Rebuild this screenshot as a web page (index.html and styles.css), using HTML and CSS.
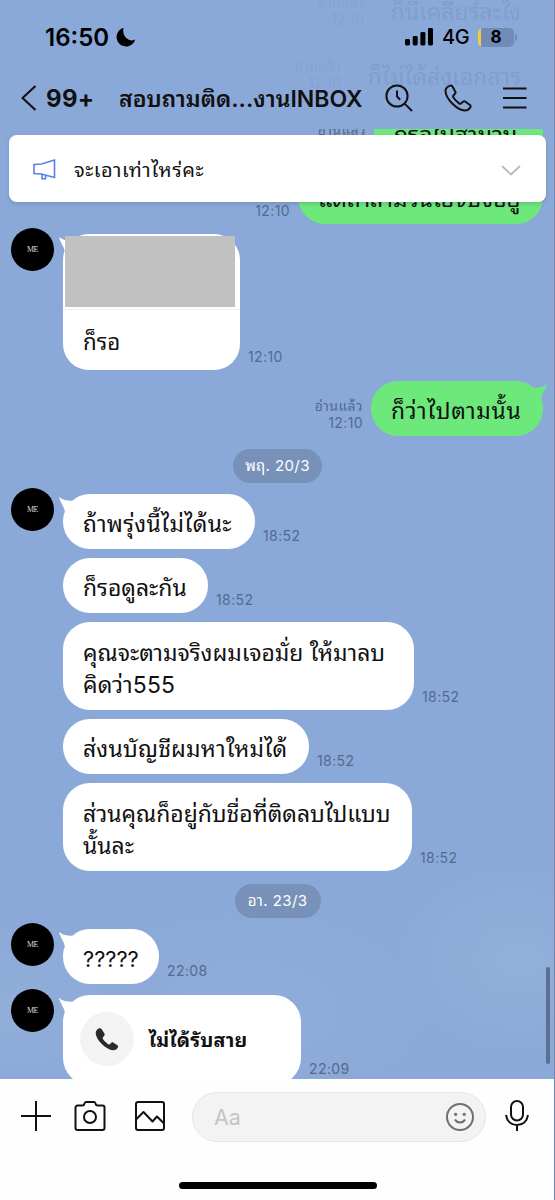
FILE: index.html
```html
<!DOCTYPE html>
<html lang="th">
<head>
<meta charset="utf-8">
<title>Chat</title>
<link rel="stylesheet" href="styles.css">
</head>
<body>
<div class="phone">
  <header class="top">
    <div class="ghosts">
      <span class="ghost ghost-a">ก็นี่เคลียร์ละไง</span>
      <span class="ghost ghost-b">ก็ไม่ได้ส่งเอกสาร</span>
      <span class="ghost ghost-c">อ่านแล้ว<br>12:10</span>
      <span class="ghost ghost-d">อ่านแล้ว<br>12:10</span>
    </div>
    <div class="status">
      <span class="clock">16:50</span>
      <svg class="moon" width="20" height="20" viewBox="0 0 20 20"><path d="M7.500.8A9.500 9.500 0 1 0 19.200 12.600C14 15.500 5.500 10.500 7.500.8Z"/></svg>
      <svg class="signal" width="29" height="18" viewBox="0 0 29 18"><rect x="0" y="11" width="5" height="6.5" rx="1.4"/><rect x="7.7" y="8" width="5" height="9.5" rx="1.4"/><rect x="15.4" y="4" width="5" height="13.5" rx="1.4"/><rect x="23" y="0" width="5" height="17.5" rx="1.4"/></svg>
      <span class="net">4G</span>
      <span class="battery">8</span>
    </div>
    <nav class="bar">
      <svg class="back" width="16" height="26" viewBox="0 0 16 26"><path d="M14.5 1 1.5 13l13 12"/></svg>
      <span class="count">99+</span>
      <h1 class="title">สอบถามติด...งานINBOX</h1>
      <svg class="ico find" width="28" height="28" viewBox="0 0 28 28"><circle cx="12" cy="12" r="10.6"/><path d="M19.6 19.6 27 27M12 6.5v6l3.2 3.2"/></svg>
      <svg class="ico call" width="28" height="28" viewBox="0 0 28 28"><path d="M6.2 1.6C3.8 2.4 1.6 4 1.5 6.800c0 4 3.200 9.200 7 13C12.500 23.700 17 26.600 21 26.500c2.700-.1 4.500-1.600 5.400-3.300.4-.8.2-1.600-.5-2.200l-4.400-3.300c-.8-.6-1.800-.6-2.500 0l-2 1.700c-.6.5-1.300.4-1.900 0-1.900-1.400-4.400-4-5.700-5.900-.5-.7-.4-1.400.1-2l1.500-1.800c.6-.7.6-1.700.1-2.500L8.300 2.300c-.5-.7-1.300-1-2.100-.7Z"/></svg>
      <svg class="ico menu" width="24" height="24" viewBox="0 0 24 24"><path d="M0 2.500h23.500M0 12h23.500M0 21.500h23.500"/></svg>
    </nav>
  </header>

  <section class="notice">
    <svg class="horn" width="24" height="24" viewBox="0 0 24 24"><path d="M2 7.500 9.500 7 22.500 3v17.500L9.500 17 2 16.500ZM10 17.500v4.200h3.500v-3.500"/></svg>
    <span class="notice-text">จะเอาเท่าไหร่คะ</span>
    <svg class="chev" width="20" height="11" viewBox="0 0 20 11"><path d="m1 1 9 8.500L19 1"/></svg>
  </section>

  <main class="chat">
    <div class="row me first"><span class="meta">อ่านแล้ว<br>12:10</span><div class="bubble green w169"><span class="t a1">ก็รอไปสามวัน</span></div></div>
    <div class="row me"><span class="meta">12:10</span><div class="bubble green w245"><span class="t a2">แต่ถ้าสามวันไอ้จบงี้อยู่</span></div></div>
    <div class="row gap-quote">
      <span class="avatar">ME</span>
      <div class="bubble quote"><svg class="tail" width="22" height="16" viewBox="0 0 22 16"><path d="M0 0c5 4 12 4.500 20 3L6 15C5 9 1 5 0 0Z"/></svg><div class="cover"></div><div class="reply"><span class="t b1">ก็รอ</span></div></div>
      <span class="meta">12:10</span>
    </div>
    <div class="row me gap-own"><span class="meta">อ่านแล้ว<br>12:10</span><div class="bubble green w172"><svg class="tail" width="22" height="16" viewBox="0 0 22 16"><path d="M0 0c5 4 12 4.500 20 3L6 15C5 9 1 5 0 0Z"/></svg><span class="t a3">ก็ว่าไปตามนั้น</span></div></div>
    <div class="date d1">พฤ. 20/3</div>
    <div class="row gap-date">
      <span class="avatar">ME</span>
      <div class="bubble w192"><svg class="tail" width="22" height="16" viewBox="0 0 22 16"><path d="M0 0c5 4 12 4.500 20 3L6 15C5 9 1 5 0 0Z"/></svg><span class="t b2">ถ้าพรุ่งนี้ไม่ได้นะ</span></div>
      <span class="meta">18:52</span>
    </div>
    <div class="row next"><div class="bubble w145"><span class="t b3">ก็รอดูละกัน</span></div><span class="meta">18:52</span></div>
    <div class="row next"><div class="bubble two w351"><span class="t b4">คุณจะตามจริงผมเจอมั่ย ให้มาลบ</span><br><span class="t b5">คิดว่า555</span></div><span class="meta">18:52</span></div>
    <div class="row next"><div class="bubble w246"><span class="t b6">ส่งนบัญชีผมหาใหม่ได้</span></div><span class="meta">18:52</span></div>
    <div class="row next"><div class="bubble two w349"><span class="t b7">ส่วนคุณก็อยู่กับชื่อที่ติดลบไปแบบ</span><br><span class="t b8">นั้นละ</span></div><span class="meta">18:52</span></div>
    <div class="date d2">อา. 23/3</div>
    <div class="row gap-date">
      <span class="avatar">ME</span>
      <div class="bubble w96"><svg class="tail" width="22" height="16" viewBox="0 0 22 16"><path d="M0 0c5 4 12 4.500 20 3L6 15C5 9 1 5 0 0Z"/></svg><span class="t b9">?????</span></div>
      <span class="meta">22:08</span>
    </div>
    <div class="row gap-call">
      <span class="avatar">ME</span>
      <div class="bubble missed"><svg class="tail" width="22" height="16" viewBox="0 0 22 16"><path d="M0 0c5 4 12 4.500 20 3L6 15C5 9 1 5 0 0Z"/></svg>
        <span class="disc"><svg width="24" height="24" viewBox="0 0 24 24"><path d="M3.800 1.400C1.800 2.300.6 4 .7 6.300c.2 3.500 2.800 7.600 6.100 10.800 3.500 3.400 7.700 6.100 11.300 6.100 2.300 0 4.100-1 4.900-2.900.3-.8.1-1.500-.6-2L18.600 15.700c-.7-.5-1.500-.5-2.200.1l-1.700 1.400c-.5.4-1.100.4-1.600 0-1.900-1.300-3.900-3.300-5.200-5.200-.4-.6-.3-1.200.1-1.700L9.300 8.600c.5-.6.5-1.400.1-2L6.500 2C5.900 1.100 4.900.9 3.800 1.400Z"/></svg></span>
        <span class="t missed-text">ไม่ได้รับสาย</span>
      </div>
      <span class="meta">22:09</span>
    </div>
  </main>

  <footer class="composer">
    <div class="tools">
      <svg class="ico plus" width="30" height="30" viewBox="0 0 30 30"><path d="M15 0v30M0 15h30"/></svg>
      <svg class="ico cam" width="32" height="32" viewBox="0 0 32 32"><path d="M3.500 5.500H8.500Q10 5.500 10.300 4 10.800 2 12 2h8q1.200 0 1.700 2 .3 1.500 1.800 1.500h5A2 2 0 0 1 30.500 7.500V28a2 2 0 0 1-2 2h-25a2 2 0 0 1-2-2V7.500a2 2 0 0 1 2-2Z"/><circle cx="16" cy="17" r="6"/></svg>
      <svg class="ico pic" width="30" height="30" viewBox="0 0 30 30"><rect x="1" y="1" width="28" height="28" rx="2"/><path d="M1 18.500 8.500 11l9 9.500 4.500-5 7 7"/></svg>
      <div class="field"><span class="hint">Aa</span>
        <svg class="smile" width="28" height="28" viewBox="0 0 28 28"><circle cx="14" cy="14" r="13"/><path d="M9 16.500c2 4 8 4 10 0"/><circle class="eye" cx="9.600" cy="11.300" r="1.600"/><circle class="eye" cx="18.200" cy="11.300" r="1.600"/></svg>
      </div>
      <svg class="ico mic" width="24" height="31" viewBox="0 0 24 31"><rect x="6" y="1" width="12" height="19.500" rx="6"/><path d="M1 15c1 6.500 5.500 10 11 10s10-3.500 11-10M12 25v6"/></svg>
    </div>
    <div class="home"></div>
  </footer>
  <div class="scroll"></div>
</div>
</body>
</html>
```
FILE: styles.css
```css
* { box-sizing: border-box; }
body { margin: 0; }
.phone {
  position: relative; width: 555px; height: 1200px; overflow: hidden;
  display: flex; flex-direction: column;
  background:
    radial-gradient(ellipse 130px 100px at 520px 960px, rgba(255,255,255,.07), transparent),
    radial-gradient(ellipse 200px 110px at 250px 1010px, rgba(255,255,255,.04), transparent),
    radial-gradient(ellipse 120px 90px at 10px 1010px, rgba(255,255,255,.06), transparent),
    #8ba9d8;
  font-family: Inter, "Noto Sans Thai Looped", Loma, "Noto Sans Thai", sans-serif;
  color: #111;
}
.phone::after { content: ""; position: absolute; top: 0; right: 0; width: 1px; height: 1200px; background: #6e86ad; }
svg { fill: none; flex: none; }

/* header */
.top { position: relative; flex: none; height: 129px; padding-top: 24px; }
.ghost { position: absolute; color: rgba(70,100,155,.17); font-size: 22.900px; white-space: nowrap; filter: blur(.6px); }
.ghost-a { right: 34px; top: -9px; }
.ghost-b { right: 34px; top: 56px; }
.ghost-c { right: 191px; top: -6px; font-size: 14px; line-height: 17px; opacity: .6; text-align: right; }
.ghost-d { right: 214px; top: 57px; font-size: 14px; line-height: 17px; opacity: .6; text-align: right; }
.status { position: relative; display: flex; align-items: center; height: 26px; padding-left: 45px; }
.clock { width: 71px; font-size: 24px; font-weight: 600; letter-spacing: 0; color: #000; }
.moon { fill: #000; }
.signal { fill: #000; margin-left: 269px; }
.net { margin-left: 8px; width: 36px; font-size: 20px; font-weight: 500; letter-spacing: -.5px; color: #000; }
.battery { position: relative; width: 36px; height: 19px; border-radius: 5px; background: linear-gradient(90deg, #f4cf3a 3px, #708bb5 3px); font-size: 17px; line-height: 19px; font-weight: 700; text-align: center; color: #000; }
.battery::after { content: ""; position: absolute; right: -3px; top: 6px; width: 2px; height: 7px; border-radius: 0 2px 2px 0; background: #708bb5; }
.bar { position: relative; display: flex; align-items: center; height: 30px; margin-top: 33px; padding-left: 21px; }
.back { stroke: #111; stroke-width: 2.200; margin-top: -1px; }
.count { width: 73px; margin-left: 9px; font-size: 24px; font-weight: 650; letter-spacing: .3px; }
.title { width: 244px; margin: 0 22px 0 0; padding-top: 2px; font-size: 23px; line-height: 30px; font-weight: 600; white-space: nowrap; }
.ico { stroke: #111; stroke-width: 2; stroke-linejoin: round; }
.call { margin-left: 31px; }
.menu { margin-left: 31px; }

/* pinned notice */
.notice {
  position: absolute; z-index: 2; left: 9px; top: 135px; width: 537px; height: 67px; border-radius: 8px;
  display: flex; align-items: center; padding: 0 25px 0 23px; background: #fff; box-shadow: 0 2px 4px rgba(40,60,110,.2);
}
.horn { stroke: #5b7fe8; stroke-width: 1.600; }
.notice-text { flex: 1; margin: -2px 0 0 18px; font-size: 20px; letter-spacing: .55px; }
.chev { stroke: #bbb; stroke-width: 1.800; margin-top: 3px; }

/* messages */
.chat { flex: none; height: 950px; overflow: hidden; display: flex; flex-direction: column; }
.row { position: relative; flex: none; display: flex; align-items: flex-end; padding-left: 63px; margin-top: 9px; }
.me { justify-content: flex-end; padding: 0 12px 0 0; }
.first { margin-top: -24px; }
.gap-quote { margin-top: 10px; }
.gap-own { margin-top: 11px; }
.gap-date { margin-top: 11px; }
.gap-call { margin-top: 11px; }
.bubble { position: relative; height: 55px; padding: 14px 0 0 20px; border-radius: 27px; background: #fff; font-size: 22.900px; line-height: 32px; white-space: nowrap; }
.green { background: #6de87b; }
.two { height: 88px; padding-top: 15px; }
.a3 { letter-spacing: .7px; }
.b1 { font-size: 22.300px; }
.b2 { letter-spacing: .3px; }
.b5, .b6 { letter-spacing: .2px; }
.b9 { font-size: 21.800px; }
.tail { position: absolute; left: -4px; top: 3px; fill: #fff; }
.green .tail { left: auto; right: -4px; transform: scaleX(-1); fill: #6de87b; }
.w96 { width: 96px; } .w145 { width: 145px; } .w169 { width: 169px; } .w172 { width: 172px; }
.w192 { width: 192px; } .w245 { width: 245px; } .w246 { width: 246px; } .w349 { width: 349px; } .w351 { width: 351px; }
.quote { width: 177px; height: 136px; padding: 0; border-radius: 26px; }
.cover { position: relative; width: 170px; height: 71px; margin: 1px 0 0 2px; background: #c1c1c1; }
.reply { height: 61px; margin-top: 3px; padding: 16px 0 0 20px; border-top: 1px solid #efefef; }
.quote .cover { top: 1px; }
.meta { padding: 0 8px 5px; font-size: 14px; line-height: 17px; letter-spacing: .4px; color: #55698f; text-align: right; }
.avatar { position: absolute; left: 11px; top: -6px; width: 43px; height: 43px; border-radius: 50%; background: #000; color: #ddd; font: 8px/43px "Liberation Serif", serif; letter-spacing: -.5px; text-align: center; }
.date { flex: none; align-self: center; height: 34px; margin-top: 13px; border-radius: 17px; background: #7891b9; color: #fff; font-size: 15px; line-height: 34px; text-align: center; letter-spacing: .4px; }
.d1 { width: 89px; }
.d2 { width: 86px; }
.missed { width: 238px; height: 90px; padding: 17px 0 0 17px; display: flex; align-items: flex-start; }
.missed + .meta { padding-bottom: 8px; }
.disc { width: 54px; height: 54px; border-radius: 50%; background: #f3f3f3; display: grid; place-items: center; }
.disc path { fill: #2b2b2b; }
.missed-text { margin: 12px 0 0 15px; font-size: 19.600px; font-weight: 700; letter-spacing: .2px; }

/* composer */
.composer { flex: none; height: 121px; background: #fefefe; padding-top: 12px; }
.tools { display: flex; align-items: center; height: 51px; padding-left: 21px; }
.plus, .cam, .pic, .mic { margin-top: -2px; }
.cam { margin-left: 23px; }
.pic { margin-left: 29px; }
.field { width: 294px; height: 50px; margin-left: 27px; border: 1px solid #e6e6e6; border-radius: 25px; background: #f3f3f3; display: flex; align-items: center; justify-content: space-between; padding: 0 11px 0 21px; }
.hint { font-size: 21.500px; color: #c4c4c4; }
.smile { stroke: #6f6f6f; stroke-width: 2; }
.eye { fill: #6f6f6f; stroke: none; }
.mic { margin-left: 19px; }
.home { width: 198px; height: 7px; margin: 40px 0 0 179px; border-radius: 4px; background: #000; }
.scroll { position: absolute; left: 546px; top: 967px; width: 4px; height: 97px; border-radius: 2px; background: #5c7090; }
```
